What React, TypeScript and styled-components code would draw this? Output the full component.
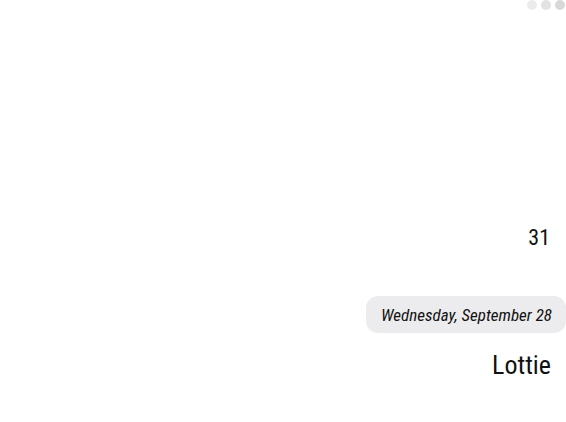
import * as React from 'react';
import styled, { createGlobalStyle } from 'styled-components';

const GlobalStyle = createGlobalStyle`
  html, body {
    margin: 0;
    padding: 0;
    background: #ffffff;
  }
  body {
    font-family: 'Liberation Sans Narrow', 'Roboto Condensed', 'Liberation Sans', sans-serif;
    color: #111111;
  }
`;

const Screen = styled.div`
  width: 566px;
  height: 422px;
  overflow: hidden;
  display: flex;
  flex-direction: column;
  align-items: flex-end;
`;

const Dots = styled.div`
  display: flex;
  gap: 4px;
  margin-right: 1px;
  height: 10px;
`;

const Dot = styled.span<{ shade: string }>`
  width: 10px;
  height: 10px;
  border-radius: 50%;
  background: ${(p) => p.shade};
`;

const DayNumber = styled.div`
  margin-top: 215px;
  margin-right: 16px;
  font-size: 22px;
  line-height: 26px;
`;

const DatePill = styled.div`
  margin-top: 45px;
  height: 37px;
  padding: 0 14px 0 15px;
  display: flex;
  align-items: center;
  background: #ececee;
  border-radius: 12px;
  font-size: 17px;
  font-style: italic;
`;

const Name = styled.div`
  margin-top: 17px;
  margin-right: 15px;
  font-size: 26px;
  line-height: 30px;
`;

const App: React.FC = () => (
  <Screen>
    <GlobalStyle />
    <Dots>
      <Dot shade="#ececec" />
      <Dot shade="#e2e2e2" />
      <Dot shade="#d8d8d8" />
    </Dots>
    <DayNumber>31</DayNumber>
    <DatePill>Wednesday, September 28</DatePill>
    <Name>Lottie</Name>
  </Screen>
);

export default App;
